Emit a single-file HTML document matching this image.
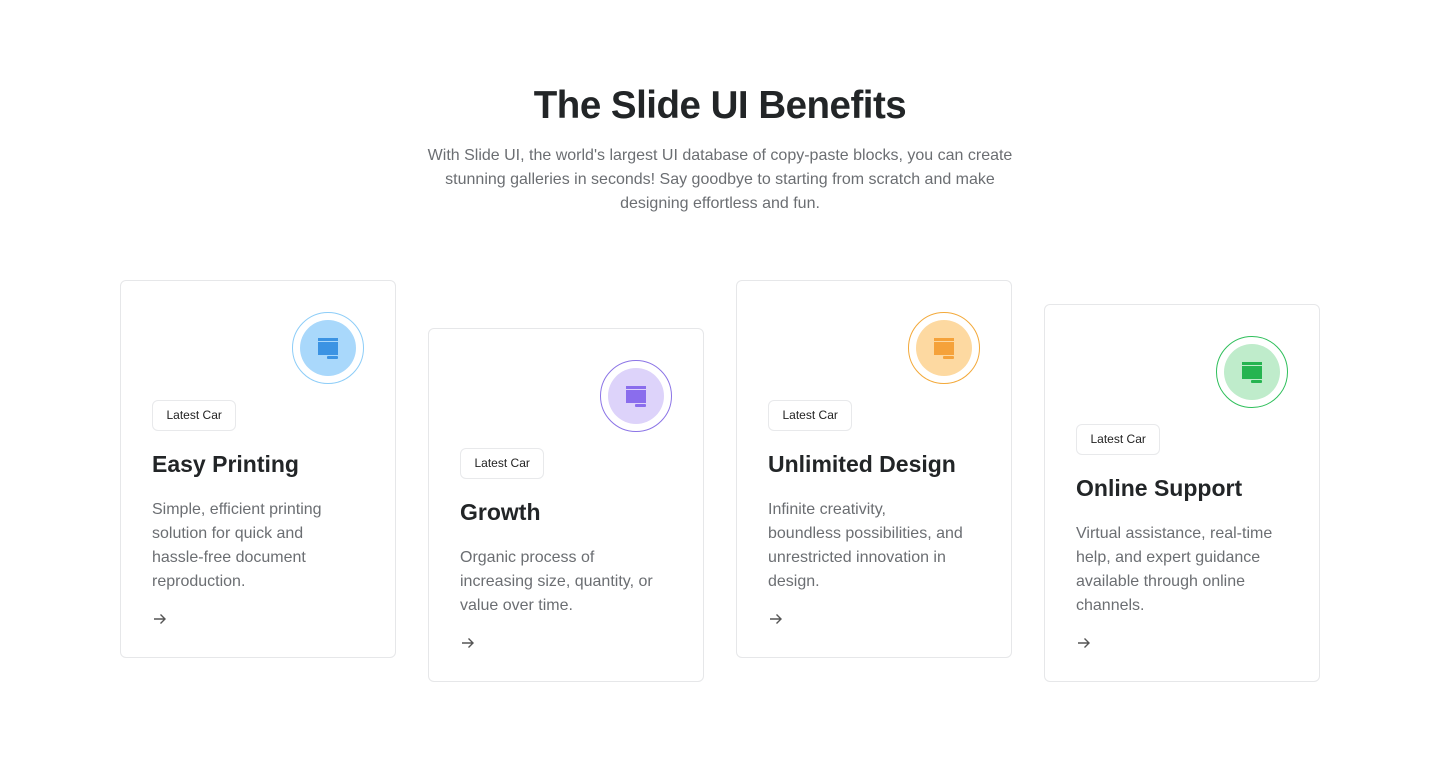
<!DOCTYPE html>
<html><head><style>
body{margin:0;background:#fff;font-family:"Liberation Sans",sans-serif;width:1440px;height:762px;position:relative;overflow:hidden}
h1{position:absolute;top:79px;left:0;width:1440px;text-align:center;margin:0;font-size:38.5px;font-weight:700;color:#222527;letter-spacing:-0.5px;line-height:54px}
.sub{position:absolute;top:144px;left:400px;width:640px;text-align:center;font-size:16px;line-height:24px;color:#6b6e72;margin:0}
.card{position:absolute;width:274px;border:1px solid #e6e7e9;border-radius:6px;background:#fff}
.ring{position:absolute;left:171px;top:31px;width:72px;height:72px;border-radius:50%;box-sizing:border-box;border:1px solid}
.ring .in{position:absolute;left:7px;top:7px;width:56px;height:56px;border-radius:50%}
.ring svg{position:absolute;left:23px;top:22px}
.badge{position:absolute;left:31px;top:119px;height:29px;padding:0 13.5px;border:1px solid #e8e9eb;border-radius:6px;font-size:12px;line-height:29px;color:#222}
.t{position:absolute;left:31px;top:166px;font-size:23px;font-weight:600;color:#222527;margin:0;line-height:34px}
.d{position:absolute;left:31px;top:217px;width:230px;font-size:16px;line-height:24px;color:#6b6e72;margin:0;white-space:nowrap}
.a{position:absolute;left:31px}
</style></head><body>
<h1>The Slide UI Benefits</h1>
<p class="sub">With Slide UI, the world's largest UI database of copy-paste blocks, you can create<br>stunning galleries in seconds! Say goodbye to starting from scratch and make<br>designing effortless and fun.</p>

<div class="card" style="left:120px;top:280px;height:376px">
<div class="ring" style="border-color:#8dcdf8"><div class="in" style="background:#a9d8fb"></div><svg width="24" height="26" viewBox="0 0 24 26"><rect x="2" y="3" width="20" height="3" fill="#3b93e3"/><rect x="2" y="7" width="20" height="13" fill="#3b93e3"/><rect x="11" y="21" width="11" height="3" rx="1" fill="#3b93e3"/></svg></div>
<div class="badge">Latest Car</div><p class="t">Easy Printing</p>
<p class="d">Simple, efficient printing<br>solution for quick and<br>hassle-free document<br>reproduction.</p>
<svg class="a" style="top:330px" width="16" height="16" viewBox="0 0 16 16"><path d="M2 8h11M8.5 3.5L13 8l-4.5 4.5" fill="none" stroke="#555" stroke-width="1.4"/></svg></div>

<div class="card" style="left:428px;top:328px;height:352px">
<div class="ring" style="border-color:#8b74e6"><div class="in" style="background:#ddd3fa"></div><svg width="24" height="26" viewBox="0 0 24 26"><rect x="2" y="3" width="20" height="3" fill="#8a6ded"/><rect x="2" y="7" width="20" height="13" fill="#8a6ded"/><rect x="11" y="21" width="11" height="3" rx="1" fill="#8a6ded"/></svg></div>
<div class="badge">Latest Car</div><p class="t">Growth</p>
<p class="d">Organic process of<br>increasing size, quantity, or<br>value over time.</p>
<svg class="a" style="top:306px" width="16" height="16" viewBox="0 0 16 16"><path d="M2 8h11M8.5 3.5L13 8l-4.5 4.5" fill="none" stroke="#555" stroke-width="1.4"/></svg></div>

<div class="card" style="left:736px;top:280px;height:376px">
<div class="ring" style="border-color:#f3a93a"><div class="in" style="background:#fdd9a1"></div><svg width="24" height="26" viewBox="0 0 24 26"><rect x="2" y="3" width="20" height="3" fill="#f5a23a"/><rect x="2" y="7" width="20" height="13" fill="#f5a23a"/><rect x="11" y="21" width="11" height="3" rx="1" fill="#f5a23a"/></svg></div>
<div class="badge">Latest Car</div><p class="t">Unlimited Design</p>
<p class="d">Infinite creativity,<br>boundless possibilities, and<br>unrestricted innovation in<br>design.</p>
<svg class="a" style="top:330px" width="16" height="16" viewBox="0 0 16 16"><path d="M2 8h11M8.5 3.5L13 8l-4.5 4.5" fill="none" stroke="#555" stroke-width="1.4"/></svg></div>

<div class="card" style="left:1044px;top:304px;height:376px">
<div class="ring" style="border-color:#2fbf5b"><div class="in" style="background:#bfeccb"></div><svg width="24" height="26" viewBox="0 0 24 26"><rect x="2" y="3" width="20" height="3" fill="#25b450"/><rect x="2" y="7" width="20" height="13" fill="#25b450"/><rect x="11" y="21" width="11" height="3" rx="1" fill="#25b450"/></svg></div>
<div class="badge">Latest Car</div><p class="t">Online Support</p>
<p class="d">Virtual assistance, real-time<br>help, and expert guidance<br>available through online<br>channels.</p>
<svg class="a" style="top:330px" width="16" height="16" viewBox="0 0 16 16"><path d="M2 8h11M8.5 3.5L13 8l-4.5 4.5" fill="none" stroke="#555" stroke-width="1.4"/></svg></div>
</body></html>
